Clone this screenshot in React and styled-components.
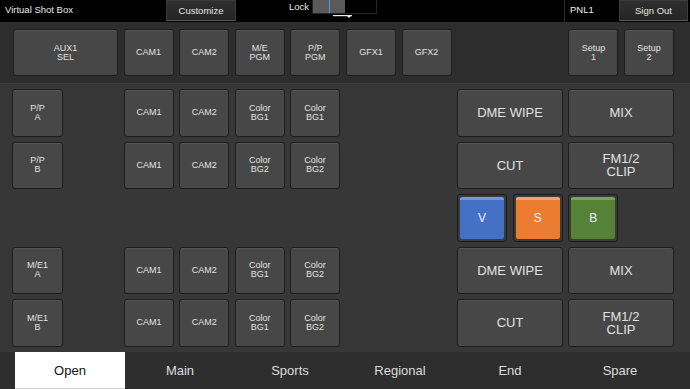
import React from "react";
import styled, { createGlobalStyle, css } from "styled-components";

const Global = createGlobalStyle`
  html, body { margin: 0; padding: 0; background: #000; }
  body { font-family: "Liberation Sans", Arial, sans-serif; }
  * { box-sizing: border-box; }
`;

const Screen = styled.div`
  width: 690px;
  height: 389px;
  display: flex;
  flex-direction: column;
  background: #373737;
  overflow: hidden;
  color: #e2e2e2;
`;

/* ---------- header ---------- */
const Header = styled.div`
  height: 22px;
  background: #000;
  display: flex;
  align-items: stretch;
  font-size: 9.5px;
  flex-shrink: 0;
`;

const Title = styled.div`
  width: 166px;
  padding-left: 5px;
  display: flex;
  align-items: center;
  padding-bottom: 3px;
  color: #e8e8e8;
`;

const HeaderButton = styled.div`
  width: ${(p) => p.$w}px;
  height: 21px;
  background: linear-gradient(#2e2e2e, #262626);
  border: 1px solid #3a3a3a;
  border-bottom-color: #5a5a5a;
  display: flex;
  align-items: center;
  justify-content: center;
  color: #e6e6e6;
  padding-bottom: 1px;
`;

const LockGroup = styled.div`
  margin-left: 53px;
  display: flex;
  align-items: flex-start;
  position: relative;
`;

const LockLabel = styled.div`
  width: 23px;
  padding-top: 1px;
  color: #e6e6e6;
`;

const LockTrack = styled.div`
  width: 65px;
  height: 14px;
  border: 1px solid #262626;
  border-top: none;
  display: flex;
`;

const LockThumb = styled.div`
  width: 32px;
  height: 100%;
  background: #5a5a5a;
  display: flex;
  justify-content: center;
`;

const LockLine = styled.div`
  width: 1px;
  height: 100%;
  background: #4a9ade;
`;

const LockArrow = styled.svg`
  position: absolute;
  left: 44px;
  top: 14px;
`;

const Spacer = styled.div`
  flex: 1;
`;

const PanelName = styled.div`
  width: 55px;
  border-left: 1px solid #2c2c2c;
  padding-left: 5px;
  display: flex;
  align-items: center;
  padding-bottom: 3px;
  color: #eee;
`;

const SignOutWrap = styled.div`
  width: 71px;
  padding-right: 2px;
`;

/* ---------- top bar ---------- */
const TopBar = styled.div`
  height: 62px;
  background: #2d2d2d;
  border-bottom: 1px solid #3c3c3c;
  display: flex;
  align-items: flex-start;
  padding: 7px 16px 0 13px;
  gap: 5.6px;
  flex-shrink: 0;
`;

const Key = styled.div`
  width: ${(p) => (p.$w ? `${p.$w}px` : "auto")};
  height: ${(p) => (p.$h ? `${p.$h}px` : "100%")};
  background: #474747;
  border: 1px solid #1d1d1d;
  border-radius: 3px;
  box-shadow: inset 0 1px 0 #555;
  display: flex;
  align-items: center;
  justify-content: center;
  text-align: center;
  font-size: ${(p) => (p.$big ? 13 : 9)}px;
  line-height: ${(p) => (p.$big ? 13 : 9)}px;
  color: #e2e2e2;
  white-space: pre-line;
  flex-shrink: 0;
`;

/* ---------- main grid ---------- */
const Main = styled.div`
  flex: 1;
  display: grid;
  grid-template-columns: 51px 61px 216px 117px 217px;
  grid-auto-rows: 47.5px;
  row-gap: 5px;
  padding: 5px 0 0 12px;
  align-content: start;
`;

const Cell = styled.div`
  grid-column: ${(p) => p.$col};
  grid-row: ${(p) => p.$row};
  display: grid;
  grid-template-columns: ${(p) => p.$cols};
  column-gap: ${(p) => p.$gap}px;
`;

const ColorKey = styled.div`
  border: 1px solid #1b1b1b;
  border-radius: 3px;
  background: #3b3b3b;
  padding: 2px;
`;

const ColorFace = styled.div`
  height: 100%;
  background: ${(p) => p.$c};
  border-top: 3px solid ${(p) => p.$t};
  border-radius: 2px;
  display: flex;
  align-items: center;
  justify-content: center;
  font-size: 12px;
  color: #eef;
  padding-bottom: 2px;
`;

/* ---------- tabs ---------- */
const TabBar = styled.div`
  height: 37px;
  background: #2e2e2e;
  display: flex;
  padding-left: 15px;
  flex-shrink: 0;
`;

const Tab = styled.div`
  width: 110px;
  display: flex;
  align-items: center;
  justify-content: center;
  font-size: 13px;
  color: #dcdcdc;
  ${(p) =>
    p.$active &&
    css`
      background: #fff;
      color: #111;
      border-bottom: 1px solid #cfcfcf;
    `}
`;

const topKeys = ["CAM1", "CAM2", "M/E\nPGM", "P/P\nPGM", "GFX1", "GFX2"];

const rows = [
  { left: "P/P\nA", mid: ["CAM1", "CAM2", "Color\nBG1", "Color\nBG1"], right: ["DME WIPE", "MIX"] },
  { left: "P/P\nB", mid: ["CAM1", "CAM2", "Color\nBG2", "Color\nBG2"], right: ["CUT", "FM1/2\nCLIP"] },
  null,
  { left: "M/E1\nA", mid: ["CAM1", "CAM2", "Color\nBG1", "Color\nBG2"], right: ["DME WIPE", "MIX"] },
  { left: "M/E1\nB", mid: ["CAM1", "CAM2", "Color\nBG1", "Color\nBG2"], right: ["CUT", "FM1/2\nCLIP"] },
];

const colorKeys = [
  { l: "V", c: "#4471c6", t: "#7098e0" },
  { l: "S", c: "#ec7c30", t: "#f4a266" },
  { l: "B", c: "#558236", t: "#77a455" },
];

const tabs = ["Open", "Main", "Sports", "Regional", "End", "Spare"];

export default function App() {
  return (
    <Screen>
      <Global />
      <Header>
        <Title>Virtual Shot Box</Title>
        <HeaderButton $w={70}>Customize</HeaderButton>
        <LockGroup>
          <LockLabel>Lock</LockLabel>
          <LockTrack>
            <LockThumb>
              <LockLine />
            </LockThumb>
          </LockTrack>
          <LockArrow width="20" height="5" viewBox="0 0 20 5">
            <rect x="0" y="1" width="19" height="1.2" fill="#eee" />
            <polygon points="13,1 19,1 16,4" fill="#eee" />
          </LockArrow>
        </LockGroup>
        <Spacer />
        <PanelName>PNL1</PanelName>
        <SignOutWrap>
          <HeaderButton $w={69}>Sign Out</HeaderButton>
        </SignOutWrap>
      </Header>

      <TopBar>
        <Key $w={105} $h={47}>{"AUX1\nSEL"}</Key>
        {topKeys.map((k, i) => (
          <Key key={i} $w={50} $h={47}>{k}</Key>
        ))}
        <Spacer />
        <Key $w={50} $h={47}>{"Setup\n1"}</Key>
        <Key $w={50} $h={47}>{"Setup\n2"}</Key>
      </TopBar>

      <Main>
        {rows.map((r, i) =>
          r ? (
            <React.Fragment key={i}>
              <Cell $col={1} $row={i + 1} $cols="1fr" $gap={0}>
                <Key>{r.left}</Key>
              </Cell>
              <Cell $col={3} $row={i + 1} $cols="repeat(4, 1fr)" $gap={5.5}>
                {r.mid.map((m, j) => (
                  <Key key={j}>{m}</Key>
                ))}
              </Cell>
              <Cell $col={5} $row={i + 1} $cols="repeat(2, 1fr)" $gap={5}>
                {r.right.map((m, j) => (
                  <Key key={j} $big>{m}</Key>
                ))}
              </Cell>
            </React.Fragment>
          ) : (
            <Cell key={i} $col={5} $row={i + 1} $cols="repeat(4, 1fr)" $gap={5.5}>
              {colorKeys.map((k) => (
                <ColorKey key={k.l}>
                  <ColorFace $c={k.c} $t={k.t}>{k.l}</ColorFace>
                </ColorKey>
              ))}
            </Cell>
          )
        )}
      </Main>

      <TabBar>
        {tabs.map((t, i) => (
          <Tab key={t} $active={i === 0}>{t}</Tab>
        ))}
      </TabBar>
    </Screen>
  );
}
